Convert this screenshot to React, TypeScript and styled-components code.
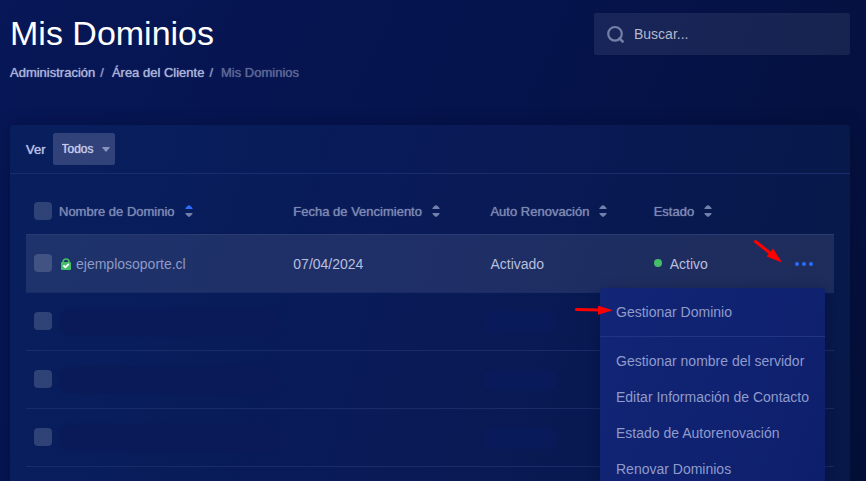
import React from "react";
import styled, { createGlobalStyle } from "styled-components";

const GlobalStyle = createGlobalStyle`
  *, *::before, *::after { box-sizing: border-box; }
  body {
    margin: 0;
    background: #04103f;
    color: #b9c1e2;
    font-family: "Liberation Sans", Arial, sans-serif;
    font-size: 14px;
  }
  button, input, select { font: inherit; }
`;

const Page = styled.main`
  display: flex;
  flex-direction: column;
  height: 100vh;
  padding: 13px 16px 0 10px;
  overflow: hidden;
  background: linear-gradient(115deg, #071757 0%, #05134b 55%, #041039 100%);
`;

const Header = styled.header`
  display: flex;
  justify-content: space-between;
  align-items: flex-start;
  height: 112px;
  flex: none;
`;

const Title = styled.h1`
  margin: 0 0 11px;
  color: #fff;
  font-size: 34px;
  font-weight: 400;
  line-height: 40px;
`;

const Crumbs = styled.nav`
  display: flex;
  font-size: 13px;
  line-height: 18px;
  text-shadow: 0 0 1px currentColor;
`;

const Crumb = styled.a`
  color: #aab4da;
  text-decoration: none;
  text-shadow: 0 0 1px currentColor;
  &::after {
    content: "/";
    margin: 0 8px 0 5px;
    color: #8b96c2;
  }
`;

const CurrentCrumb = styled.span`
  color: #5d6896;
  text-shadow: 0 0 1px currentColor;
`;

const Search = styled.label`
  display: flex;
  align-items: center;
  gap: 9px;
  width: 256px;
  height: 42px;
  padding: 0 12px;
  border-radius: 2px;
  background: rgba(255, 255, 255, 0.08);
`;

const SearchInput = styled.input`
  flex: 1;
  min-width: 0;
  padding: 0;
  border: 0;
  outline: 0;
  background: none;
  color: #c3c7d8;
  &::placeholder { color: #b4b9cc; opacity: 1; }
`;

const Card = styled.section`
  flex: 1 0 auto;
  border-radius: 4px;
  background: linear-gradient(105deg, #081f5e 0%, #091a57 50%, #071848 100%);
  box-shadow: 0 0 16px rgba(2, 8, 40, 0.4);
`;

const Filter = styled.div`
  display: flex;
  align-items: center;
  gap: 7px;
  height: 49px;
  padding: 0 16px;
  border-bottom: 1px solid #192d6c;
  color: #b7c0e4;
  font-size: 13px;
  text-shadow: 0 0 1px currentColor;
`;

const SelectBox = styled.div`
  display: grid;
  align-items: center;
  & > * { grid-area: 1 / 1; }
  & > svg { justify-self: end; margin-right: 5px; pointer-events: none; }
`;

const Select = styled.select`
  width: 62px;
  height: 32px;
  padding: 0 9px;
  appearance: none;
  border: 0;
  border-radius: 2px;
  background: #31417a;
  color: #c3cbe9;
  font-size: 12px;
  text-shadow: 0 0 1px currentColor;
`;

const TableArea = styled.div`
  padding: 14px 16px 0;
`;

const Table = styled.table`
  width: 100%;
  border-collapse: separate;
  border-spacing: 0;
  table-layout: fixed;
`;

const Col = styled.col<{ $w?: string }>`
  width: ${(p) => p.$w ?? "auto"};
`;

const HeadCell = styled.th`
  height: 46px;
  padding: 0;
  text-align: left;
  vertical-align: middle;
  font-size: 13px;
  font-weight: 400;
`;

const SortButton = styled.button`
  display: flex;
  align-items: center;
  gap: 10px;
  padding: 0;
  border: 0;
  background: none;
  color: #7c88b3;
  text-shadow: 0 0 1px currentColor;
`;

const Row = styled.tr<{ $active?: boolean }>`
  background: ${(p) => (p.$active ? "rgba(255, 255, 255, 0.09)" : "none")};
`;

const Cell = styled.td<{ $lit?: boolean }>`
  position: relative;
  height: 58px;
  padding: 0;
  border-top: 1px solid ${(p) => (p.$lit ? "#2a3a72" : "#192c67")};
  color: #b7bfdf;
`;

const CheckCell = styled(Cell)`
  padding: 0 0 2px 8px;
`;

const CheckHead = styled(HeadCell)`
  padding-left: 8px;
`;

const Checkbox = styled.input`
  display: block;
  width: 18px;
  height: 18px;
  margin: 0;
  appearance: none;
  border-radius: 4px;
  background: rgba(255, 255, 255, 0.16);
`;

const Inline = styled.span<{ $gap: number }>`
  display: flex;
  align-items: center;
  gap: ${(p) => p.$gap}px;
`;

const Domain = styled(Inline)`
  padding-left: 2px;
  & > svg { flex: none; }
`;

const DomainLink = styled.a`
  color: #8e9ac6;
  text-decoration: none;
`;

const StatusDot = styled.i`
  width: 8px;
  height: 8px;
  margin-bottom: 2px;
  border-radius: 50%;
  background: #43bd68;
`;

const Smudge = styled.span<{ $narrow?: boolean }>`
  display: block;
  width: ${(p) => (p.$narrow ? "46%" : "94%")};
  height: ${(p) => (p.$narrow ? 22 : 28)}px;
  margin-left: ${(p) => (p.$narrow ? -8 : 0)}px;
  border-radius: 12px;
  background: ${(p) => (p.$narrow ? "#091a5a" : "#0a1a58")};
  filter: blur(1px);
`;

const MoreButton = styled.button`
  display: block;
  margin: 0 19px 0 auto;
  padding: 4px 2px;
  border: 0;
  background: none;
  & > svg { display: block; }
`;

const Menu = styled.ul`
  position: absolute;
  z-index: 1;
  top: 53px;
  right: 9px;
  width: 225px;
  margin: 0;
  padding: 6px 0;
  border-radius: 4px;
  list-style: none;
  background: linear-gradient(110deg, #122576, #0d1f6c);
  box-shadow: 0 2px 12px rgba(2, 8, 40, 0.35);
`;

const MenuItem = styled.li<{ $divided?: boolean }>`
  padding-bottom: ${(p) => (p.$divided ? 6 : 0)}px;
  margin-bottom: ${(p) => (p.$divided ? 6 : 0)}px;
  border-bottom: ${(p) => (p.$divided ? "1px solid #223583" : "0")};
`;

const MenuLink = styled.a`
  display: block;
  padding: 0 16px;
  color: #8f9bcb;
  line-height: 36px;
  text-decoration: none;
  white-space: nowrap;
`;

const RowArrow = styled.svg`
  position: absolute;
  top: 4px;
  right: 52px;
`;

const MenuArrow = styled.svg`
  position: absolute;
  top: 16px;
  left: -26px;
`;

const SortIcon = ({ up }: { up?: boolean }) => (
  <svg width="8" height="12" viewBox="0 0 8 12" aria-hidden="true">
    <path d="M1 4Q0 4 0.5 3L3 0.6Q4 -0.3 5 0.6L7.5 3Q8 4 7 4Z" fill={up ? "#2b6bff" : "#7480ac"} />
    <path d="M1 8Q0 8 0.5 9L3 11.4Q4 12.3 5 11.4L7.5 9Q8 8 7 8Z" fill="#7480ac" />
  </svg>
);

const LockIcon = () => (
  <svg width="10" height="12" viewBox="0 0 10 12" aria-hidden="true">
    <path d="M2 5V4a3 3 0 0 1 6 0v1" fill="none" stroke="#43bd68" strokeWidth="1.7" />
    <rect y="4" width="10" height="8" rx="1" fill="#43bd68" />
    <path d="M2.4 7.3 4.4 9.3 7.8 6" fill="none" stroke="#fff" strokeWidth="1.8" />
  </svg>
);

const columns = ["Nombre de Dominio", "Fecha de Vencimiento", "Auto Renovación", "Estado"];
const actions = [
  "Gestionar Dominio",
  "Gestionar nombre del servidor",
  "Editar Información de Contacto",
  "Estado de Autorenovación",
  "Renovar Dominios",
];

export default function App() {
  return (
    <>
      <GlobalStyle />
      <Page>
        <Header>
          <div>
            <Title>Mis Dominios</Title>
            <Crumbs aria-label="Ruta">
              <Crumb href="#admin">Administración</Crumb>
              <Crumb href="#cliente">Área del Cliente</Crumb>
              <CurrentCrumb>Mis Dominios</CurrentCrumb>
            </Crumbs>
          </div>
          <Search>
            <svg width="19" height="19" viewBox="0 0 19 19" fill="none" stroke="#7580a9" strokeWidth="2.2" aria-hidden="true">
              <circle cx="9" cy="8.8" r="6.8" />
              <path d="M12.6 12.6 17.4 17.2" strokeWidth="2.6" />
            </svg>
            <SearchInput type="search" placeholder="Buscar..." aria-label="Buscar" />
          </Search>
        </Header>
        <Card>
          <Filter>
            <label htmlFor="ver">Ver</label>
            <SelectBox>
              <Select id="ver">
                <option>Todos</option>
              </Select>
              <svg width="8" height="5" viewBox="0 0 8 5" aria-hidden="true">
                <path d="M0.5 0H7.5Q8 0 7.5 1L4.5 4.5Q4 5 3.5 4.5L0.5 1Q0 0 0.5 0Z" fill="#8793bd" />
              </svg>
            </SelectBox>
          </Filter>
          <TableArea>
            <Table>
              <colgroup>
                <Col $w="33px" />
                <Col $w="29%" />
                <Col $w="24.4%" />
                <Col $w="20.2%" />
                <Col />
                <Col $w="60px" />
              </colgroup>
              <thead>
                <tr>
                  <CheckHead>
                    <Checkbox type="checkbox" aria-label="Seleccionar todos" />
                  </CheckHead>
                  {columns.map((name, i) => (
                    <HeadCell key={name}>
                      <SortButton type="button">
                        {name}
                        <SortIcon up={i === 0} />
                      </SortButton>
                    </HeadCell>
                  ))}
                  <HeadCell aria-label="Acciones" />
                </tr>
              </thead>
              <tbody>
                <Row $active>
                  <CheckCell $lit>
                    <Checkbox type="checkbox" aria-label="Seleccionar ejemplosoporte.cl" />
                  </CheckCell>
                  <Cell $lit>
                    <Domain $gap={5}>
                      <LockIcon />
                      <DomainLink href="#dominio">ejemplosoporte.cl</DomainLink>
                    </Domain>
                  </Cell>
                  <Cell $lit>07/04/2024</Cell>
                  <Cell $lit>Activado</Cell>
                  <Cell $lit>
                    <Inline $gap={8}>
                      <StatusDot />
                      Activo
                    </Inline>
                  </Cell>
                  <Cell $lit>
                    <MoreButton type="button" aria-label="Acciones" aria-expanded="true">
                      <svg width="18" height="4" viewBox="0 0 18 4" fill="#2b6bff" aria-hidden="true">
                        <circle cx="2" cy="2" r="2" />
                        <circle cx="9" cy="2" r="2" />
                        <circle cx="16" cy="2" r="2" />
                      </svg>
                    </MoreButton>
                    <RowArrow width="30" height="25" viewBox="0 0 30 25" aria-hidden="true">
                      <path d="M3.5 2.5 18 14" stroke="#f00" strokeWidth="3" strokeLinecap="round" />
                      <path d="M30 23.5 14.5 17.5 21 9.5Z" fill="#f00" />
                    </RowArrow>
                    <Menu>
                      {actions.map((name, i) => (
                        <MenuItem key={name} $divided={i === 0}>
                          <MenuLink href="#accion">{name}</MenuLink>
                        </MenuItem>
                      ))}
                      <MenuArrow width="39" height="12" viewBox="0 0 39 12" aria-hidden="true">
                        <path d="M2.5 5.6 26 6" stroke="#f00" strokeWidth="3" strokeLinecap="round" />
                        <path d="M39 6.3 24 10.8V1.8Z" fill="#f00" />
                      </MenuArrow>
                    </Menu>
                  </Cell>
                </Row>
                {[1, 2, 3].map((n) => (
                  <Row key={n}>
                    <CheckCell>
                      <Checkbox type="checkbox" aria-label={`Seleccionar fila ${n + 1}`} />
                    </CheckCell>
                    <Cell><Smudge /></Cell>
                    <Cell />
                    <Cell><Smudge $narrow /></Cell>
                    <Cell />
                    <Cell />
                  </Row>
                ))}
                <Row>
                  <Cell colSpan={6} />
                </Row>
              </tbody>
            </Table>
          </TableArea>
        </Card>
      </Page>
    </>
  );
}
